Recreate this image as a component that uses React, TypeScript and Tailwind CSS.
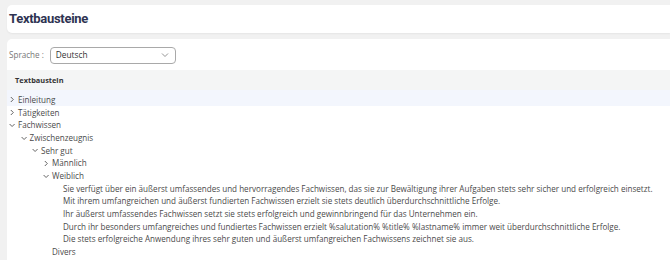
import React from "react";

type Node = {
  label: string;
  level: number;
  chevron?: "right" | "down";
  active?: boolean;
};

const rows: Node[] = [
  { label: "Einleitung", level: 0, chevron: "right", active: true },
  { label: "Tätigkeiten", level: 0, chevron: "right" },
  { label: "Fachwissen", level: 0, chevron: "down" },
  { label: "Zwischenzeugnis", level: 1, chevron: "down" },
  { label: "Sehr gut", level: 2, chevron: "down" },
  { label: "Männlich", level: 3, chevron: "right" },
  { label: "Weiblich", level: 3, chevron: "down" },
  {
    label:
      "Sie verfügt über ein äußerst umfassendes und hervorragendes Fachwissen, das sie zur Bewältigung ihrer Aufgaben stets sehr sicher und erfolgreich einsetzt.",
    level: 4,
  },
  {
    label:
      "Mit ihrem umfangreichen und äußerst fundierten Fachwissen erzielt sie stets deutlich überdurchschnittliche Erfolge.",
    level: 4,
  },
  {
    label:
      "Ihr äußerst umfassendes Fachwissen setzt sie stets erfolgreich und gewinnbringend für das Unternehmen ein.",
    level: 4,
  },
  {
    label:
      "Durch ihr besonders umfangreiches und fundiertes Fachwissen erzielt %salutation% %title% %lastname% immer weit überdurchschnittliche Erfolge.",
    level: 4,
  },
  {
    label:
      "Die stets erfolgreiche Anwendung ihres sehr guten und äußerst umfangreichen Fachwissens zeichnet sie aus.",
    level: 4,
  },
  { label: "Divers", level: 3 },
];

const indent = ["pl-[2px]", "pl-[13.5px]", "pl-[25px]", "pl-[36px]", "pl-[56px]"];

const Chevron = ({ dir }: { dir?: "right" | "down" }) => (
  <svg width="9" height="7" viewBox="0 0 9 7" className="shrink-0">
    {dir === "right" && (
      <path d="M1.8 1 L4.3 3.5 L1.8 6" fill="none" stroke="#555" strokeWidth="0.9" />
    )}
    {dir === "down" && (
      <path d="M0.6 2 L3.1 4.5 L5.6 2" fill="none" stroke="#555" strokeWidth="0.9" />
    )}
  </svg>
);

export default function App() {
  return (
    <div className="w-[670px] h-[260px] overflow-hidden bg-[#f1f1f1] pt-[5px] pl-[7px] font-['Open_Sans',sans-serif]">
      <div className="bg-white rounded-l-[5px] h-[28px] flex items-center pl-[2px] shadow-[0_1px_2px_rgba(0,0,0,0.05)]">
        <h1 className="text-[13px] font-bold text-[#2e3352] font-['Roboto',sans-serif] tracking-[-0.3px]">
          Textbausteine
        </h1>
      </div>

      <div className="bg-white rounded-tl-[5px] mt-[6px] h-[240px]">
        <div className="flex items-center h-[31px] pl-[2px] pt-[1px]">
          <span className="text-[8.1px] text-[#777] mr-[6px]">Sprache :</span>
          <div className="w-[126px] h-[17px] border border-[#a9a9a9] rounded-[4px] flex items-center justify-between pl-[5px] pr-[6px]">
            <span className="text-[8.3px] text-[#333]">Deutsch</span>
            <svg width="8" height="6" viewBox="0 0 8 6">
              <path d="M1 1.5 L4 4.5 L7 1.5" fill="none" stroke="#888" strokeWidth="0.9" />
            </svg>
          </div>
        </div>

        <div className="bg-[#f4f5f5] h-[20px] flex items-center pl-[8px] pt-[2px]">
          <span className="text-[7.4px] font-bold text-[#333]">Textbaustein</span>
        </div>

        <div className="flex flex-col">
          {rows.map((r, i) => (
            <div
              key={i}
              className={`flex items-center text-[8.1px] text-[#4a4a4a] whitespace-nowrap ${indent[r.level]} ${
                r.active ? "bg-[#f3f6fd] h-[16.3px] pt-[3.6px]" : "h-[12.7px]"
              }`}
            >
              {r.level < 4 && <Chevron dir={r.chevron} />}
              <span>{r.label}</span>
            </div>
          ))}
        </div>
      </div>
    </div>
  );
}
